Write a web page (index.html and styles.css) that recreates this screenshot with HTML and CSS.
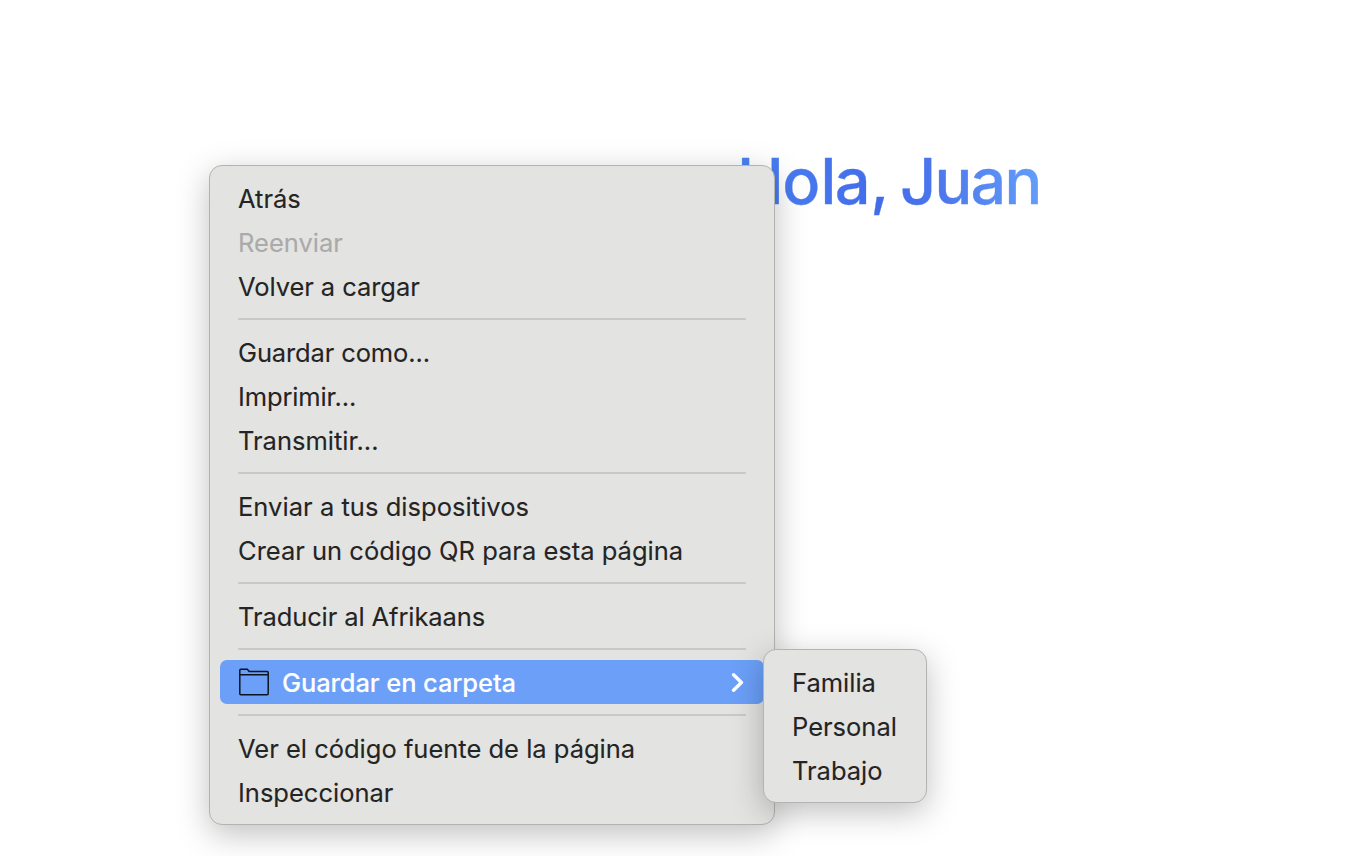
FILE: index.html
```html
<!DOCTYPE html>
<html lang="es">
<head>
<meta charset="utf-8">
<title>Hola, Juan</title>
<link rel="stylesheet" href="styles.css">
</head>
<body>
<h1 class="greeting"><span class="greeting-text">H<span class="loose">o</span>l<span class="comma-gap">a</span><span class="tight">,</span> Juan</span></h1>
<nav class="menu main-menu">
  <div class="item">Atrás</div>
  <div class="item disabled">Reenviar</div>
  <div class="item reload">Volver a cargar</div>
  <hr class="separator">
  <div class="item dots">Guardar como...</div>
  <div class="item dots">Imprimir...</div>
  <div class="item">Transmitir...</div>
  <hr class="separator">
  <div class="item devices">Enviar a tus dispositivos</div>
  <div class="item">Crear un código QR para esta página</div>
  <hr class="separator">
  <div class="item translate">Traducir al Afrikaans</div>
  <hr class="separator">
  <div class="item selected">
    <svg class="folder" viewBox="0 0 32 28" width="32" height="28"><path d="M1.800 25.500V2.300Q1.800 1.300 2.800 1.300H9.300L11.200 3.600H29.200Q30.200 3.600 30.200 4.600V25.500Q30.200 26.700 29.200 26.700H2.800Q1.800 26.700 1.800 25.500ZM1.800 6.800H30.200" fill="none" stroke="#0c1420" stroke-width="1.500"/></svg>
    <span>Guardar en carpeta</span>
    <svg class="chevron" viewBox="0 0 14 20" width="14" height="20"><path d="M2.600 2.800L10.400 10.500L2.600 18.200" fill="none" stroke="#fff" stroke-width="3.500" stroke-linecap="round" stroke-linejoin="round"/></svg>
  </div>
  <hr class="separator">
  <div class="item">Ver el código fuente de la página</div>
  <div class="item">Inspeccionar</div>
</nav>
<nav class="menu submenu">
  <div class="item">Familia</div>
  <div class="item">Personal</div>
  <div class="item">Trabajo</div>
</nav>
</body>
</html>
```
FILE: styles.css
```css
* { box-sizing: border-box; }
body { margin: 0; width: 1354px; height: 856px; overflow: hidden; background: #fff; font-family: Inter, sans-serif; }
.greeting { margin: 0; padding: 140px 0 0 737px; font: 500 63px/82px Inter, sans-serif; letter-spacing: -1.800px; }
.greeting-text { background: linear-gradient(80deg, #4a84f5, #436be8 47%, #4c77ec 65%, #65a0fa); background-clip: text; color: transparent; -webkit-text-stroke: .3px transparent; }
.loose { letter-spacing: .400px; }
.comma-gap { letter-spacing: -.300px; }
.tight { letter-spacing: -4.300px; }
.menu { position: absolute; background: #e3e3e1; border: 1px solid #b3b3b2; border-radius: 13px; box-shadow: 0 9px 32px rgba(0,0,0,.25); color: #242424; }
.main-menu { left: 209px; top: 165px; width: 566px; height: 660px; padding: 10px; }
.submenu { left: 763px; top: 649px; width: 164px; height: 154px; padding: 10px; }
.item { height: 44px; padding: 0 18px; display: flex; align-items: center; white-space: nowrap; font-size: 25.500px; -webkit-text-stroke: .1px currentColor; }
.reload { letter-spacing: -.070px; }
.dots { letter-spacing: -.130px; }
.devices { letter-spacing: .040px; }
.translate { letter-spacing: -.100px; }
.disabled { color: #aaa; }
.separator { height: 2px; margin: 10px 18px; border: 0; background: #c9c9c7; }
.selected { background: #6b9ff8; color: #fff; border-radius: 7px; font-weight: 500; letter-spacing: -.110px; }
.folder { margin-right: 12px; }
.chevron { margin-left: auto; margin-right: 1px; }
```
